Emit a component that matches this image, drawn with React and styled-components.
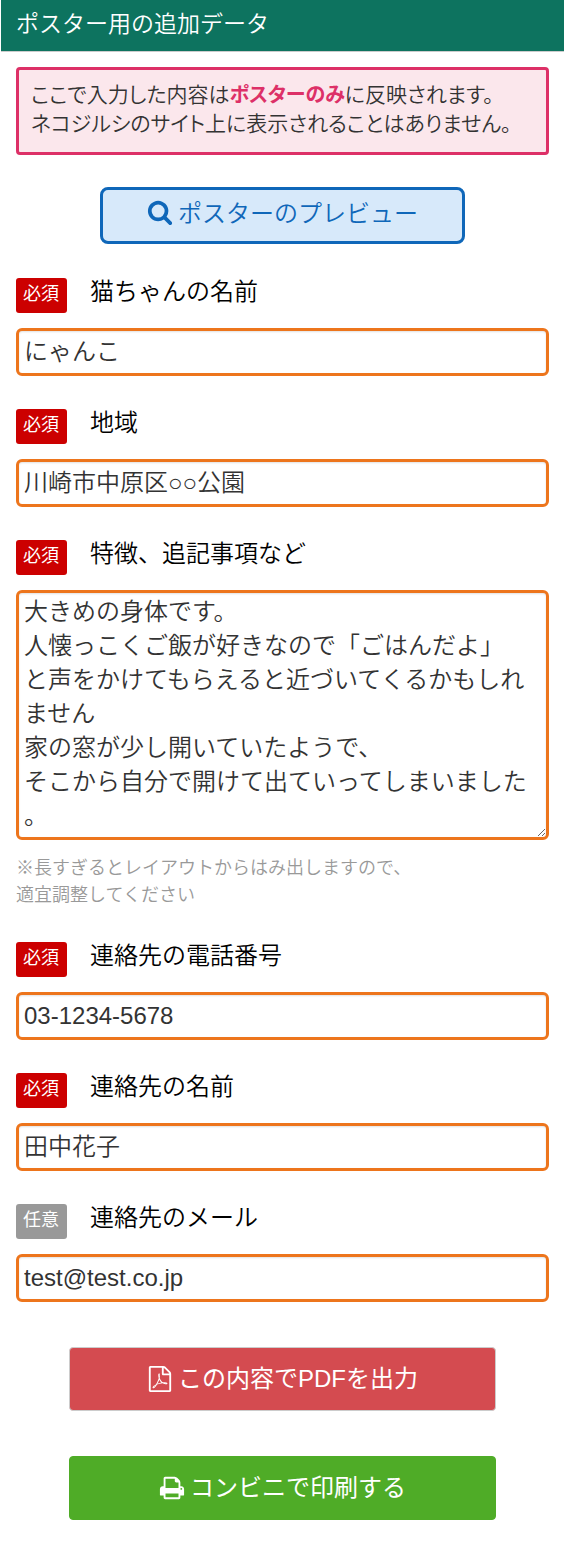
import React, { useState } from 'react'
import styled, { createGlobalStyle } from 'styled-components'

const fields = [
  { id: 'name', label: '猫ちゃんの名前', required: true, kana: true, value: 'にゃんこ' },
  { id: 'area', label: '地域', required: true, kana: true, value: '川崎市中原区○○公園' },
  {
    id: 'feature',
    label: '特徴、追記事項など',
    required: true,
    multiline: true,
    value:
      '大きめの身体です。\n人懐っこくご飯が好きなので「ごはんだよ」\nと声をかけてもらえると近づいてくるかもしれません\n家の窓が少し開いていたようで、\nそこから自分で開けて出ていってしまいました。',
  },
  { id: 'tel', label: '連絡先の電話番号', required: true, value: '03-1234-5678' },
  { id: 'contact', label: '連絡先の名前', required: true, kana: true, value: '田中花子' },
  { id: 'mail', label: '連絡先のメール', required: false, value: 'test@test.co.jp' },
]

const icons = {
  search:
    'M1216 832q0-185-131.5-316.5t-316.5-131.5-316.5 131.5-131.5 316.5 131.5 316.5 316.5 131.5 316.5-131.5 131.5-316.5zm512 832q0 52-38 90t-90 38q-54 0-90-38l-343-342q-179 124-399 124-143 0-273.5-55.5t-225-150-150-225-55.5-273.5 55.5-273.5 150-225 225-150 273.5-55.5 273.5 55.5 225 150 150 225 55.5 273.5q0 220-124 399l343 343q37 37 37 90z',
  pdf: 'M1596 380q28 28 48 76t20 88v1152q0 40-28 68t-68 28h-1344q-40 0-68-28t-28-68v-1600q0-40 28-68t68-28h896q40 0 88 20t76 48zm-444-244v376h376q-10-29-22-41l-313-313q-12-12-41-22zm384 1528v-1024h-416q-40 0-68-28t-28-68v-416h-768v1536h1280zm-514-593q33 26 84 56 59-7 117-7 147 0 177 49 16 22 2 52 0 1-1 2l-2 2v1q-6 38-71 38-48 0-115-20t-130-53q-221 24-392 83-153 262-242 262-15 0-28-7l-24-12q-1-1-6-5-10-10-6-36 9-40 56-91.5t132-96.5q14-9 23 6 2 2 2 4 52-85 107-197 68-136 104-262-24-82-30.5-159.5t6.5-127.5q11-40 42-40h22q23 0 35 15 18 21 9 68-2 6-4 8 1 3 1 8v30q-2 123-14 192 55 164 146 238zm-576 411q52-24 137-158-51 40-87.5 84t-49.5 74zm398-920q-15 42-2 132 1-7 7-44 0-3 7-43 1-4 4-8-1-1-1-2-1-2-1-3-1-22-13-36 0 1-1 2zm-124 661q135-54 284-81-2-1-13-9.5t-16-13.5q-76-67-127-176-27 86-83 197-30 56-45 83zm646-16q-24-24-140-24 76 28 124 28 14 0 18-1 0-1-2-3z',
  print:
    'M448 1536h896v-256h-896v256zm0-640h896v-384h-160q-40 0-68-28t-28-68v-160h-640v640zm1152 64q0-26-19-45t-45-19-45 19-19 45 19 45 45 19 45-19 19-45zm128 0v416q0 13-9.5 22.5t-22.5 9.5h-224v160q0 40-28 68t-68 28h-960q-40 0-68-28t-28-68v-160h-224q-13 0-22.5-9.5t-9.5-22.5v-416q0-79 56.5-135.5t135.5-56.5h64v-544q0-40 28-68t68-28h672q40 0 88 20t76 48l152 152q28 28 48 76t20 88v256h64q79 0 135.5 56.5t56.5 135.5z',
}

const Icon = ({ name }) => (
  <StyledIcon viewBox="0 0 1792 1792" aria-hidden="true">
    <path d={icons[name]} />
  </StyledIcon>
)

const Field = ({ field }) => {
  const [value, setValue] = useState(field.value)
  const onChange = (e) => setValue(e.target.value)

  return (
    <StyledField>
      <FieldHead>
        <Badge $required={field.required}>{field.required ? '必須' : '任意'}</Badge>
        <Label htmlFor={field.id}>{field.label}</Label>
      </FieldHead>

      {field.multiline ? (
        <>
          <TextArea id={field.id} value={value} onChange={onChange} />
          <Hint>
            ※長すぎるとレイアウトからはみ出しますので、
            <br />
            適宜調整してください
          </Hint>
        </>
      ) : (
        <TextInput
          id={field.id}
          type="text"
          value={value}
          onChange={onChange}
          $kana={field.kana}
        />
      )}
    </StyledField>
  )
}

export default function App() {
  return (
    <>
      <GlobalStyle />
      <Header>
        <h1>ポスター用の追加データ</h1>
      </Header>

      <Main lang="ja">
        <Notice>
          ここで入力した内容は<strong>ポスターのみ</strong>に反映されます。
          <br />
          ネコジルシのサイト上に表示されることはありません。
        </Notice>

        <PreviewButton type="button">
          <Icon name="search" />
          ポスターのプレビュー
        </PreviewButton>

        <Form onSubmit={(e) => e.preventDefault()}>
          {fields.map((field) => (
            <Field key={field.id} field={field} />
          ))}

          <Actions>
            <ActionButton type="submit" $color="#d44b50" $border="#cccccc">
              <Icon name="pdf" />
              この内容でPDFを出力
            </ActionButton>
            <ActionButton type="button" $color="#4fac27" $border="#4fac27">
              <Icon name="print" />
              コンビニで印刷する
            </ActionButton>
          </Actions>
        </Form>
      </Main>
    </>
  )
}

const GlobalStyle = createGlobalStyle`
  * {
    box-sizing: border-box;
  }

  body {
    margin: 0;
    background: #fff;
    color: #333;
    font-family: 'Noto Sans CJK JP', sans-serif;
    font-weight: 350;
  }

  button,
  input,
  textarea {
    font-family: 'Liberation Sans', 'Noto Sans CJK JP', sans-serif;
    font-weight: 350;
  }
`

const Header = styled.header`
  margin-left: 1px;
  padding: 5px 15px 12px;
  background: #0d735f;
  border-bottom: 1px solid #ccc;

  h1 {
    margin: 0;
    font-size: 23px;
    line-height: 34px;
    font-weight: 350;
    color: #fff;
  }
`

const Main = styled.main`
  padding: 15px 15px 45px 16px;
`

const Notice = styled.p`
  margin: 0;
  padding: 9px 12px 15px;
  border: 3px solid #dd3067;
  border-radius: 4px;
  background: #fbe7ec;
  font-size: 21px;
  line-height: 29px;
  font-feature-settings: 'palt';

  strong {
    font-size: 20px;
    line-height: 20px;
    font-weight: 700;
    color: #dd3067;
  }
`

const StyledIcon = styled.svg`
  flex: none;
  width: 26px;
  height: 26px;
  margin-right: 5px;
  fill: currentColor;
`

const PreviewButton = styled.button`
  display: flex;
  align-items: center;
  justify-content: center;
  width: 365px;
  max-width: 100%;
  margin: 32px auto 34px;
  padding: 7px 0 14px;
  border: 3px solid #0f67b9;
  border-radius: 8px;
  background: #d7e9fa;
  font-family: 'Noto Sans CJK JP', sans-serif;
  font-size: 24px;
  line-height: 30px;
  color: #0f67b9;
  cursor: pointer;
`

const Form = styled.form`
  display: flex;
  flex-direction: column;
  gap: 33px;
`

const StyledField = styled.div`
  display: flex;
  flex-direction: column;
`

const FieldHead = styled.div`
  display: flex;
  align-items: flex-start;
  gap: 23px;
  margin-bottom: 15px;
`

const Badge = styled.span`
  padding: 2px 8px 9px 7px;
  border-radius: 3px;
  background: ${({ $required }) => ($required ? '#cc0000' : '#999999')};
  font-size: 18px;
  line-height: 24px;
  font-weight: 400;
  color: #fff;
`

const Label = styled.label`
  font-size: 24px;
  line-height: 24px;
  color: #000;
`

/* the Japanese fallback font sits lower in the line than the Latin one */
const TextInput = styled.input`
  width: 100%;
  height: 48px;
  padding: ${({ $kana }) => ($kana ? '0 5px 6px' : '0 5px')};
  border: 3px solid #ed751c;
  border-radius: 6px;
  background: #fff;
  box-shadow: inset 0 1px 2px rgba(0, 0, 0, 0.12);
  font-size: 24px;
  line-height: 30px;
  color: #333;
`

const TextArea = styled.textarea`
  display: block;
  width: 100%;
  height: 250px;
  padding: 0 5px;
  border: 3px solid #ed751c;
  border-radius: 6px;
  background: #fff;
  box-shadow: inset 0 1px 2px rgba(0, 0, 0, 0.12);
  font-family: 'Noto Sans CJK JP', sans-serif;
  font-size: 24px;
  line-height: 34px;
  line-break: anywhere;
  color: #333;
  overflow: hidden;
  resize: vertical;
`

const Hint = styled.p`
  margin: 13px 0 2px;
  font-size: 18px;
  line-height: 27px;
  color: #999;
`

const Actions = styled.div`
  display: flex;
  flex-direction: column;
  align-items: center;
  gap: 45px;
  padding-top: 12px;
`

const ActionButton = styled.button`
  display: flex;
  align-items: center;
  justify-content: center;
  width: 80%;
  height: 64px;
  border: 1px solid ${({ $border }) => $border};
  border-radius: 4px;
  background: ${({ $color }) => $color};
  font-size: 24px;
  line-height: 30px;
  font-weight: 400;
  color: #fff;
  cursor: pointer;
`
